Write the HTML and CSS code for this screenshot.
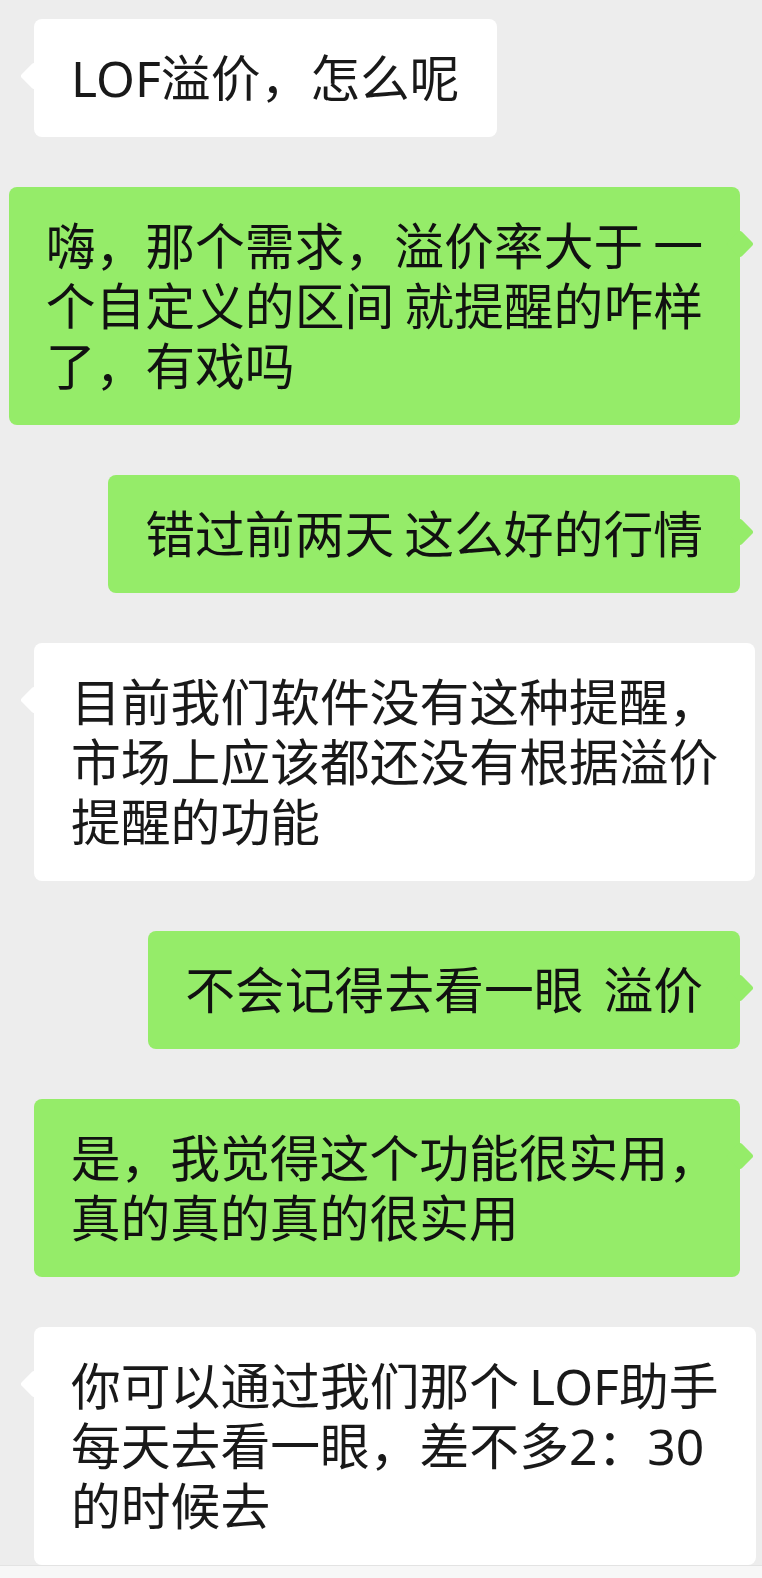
FILE: index.html
```html
<!DOCTYPE html>
<html lang="zh-CN">
<head>
    <meta charset="UTF-8">
    <meta name="viewport" content="width=device-width, initial-scale=1.0">
    <title>聊天</title>
    <link rel="stylesheet" href="styles.css">
</head>
<body>
    <div class="chat">
        <div class="msg left">
            <div class="bubble">LOF溢价，怎么呢</div>
        </div>

        <div class="msg right">
            <div class="bubble">嗨，那个需求，溢价率大于 一<br>个自定义的区间 就提醒的咋样<br>了，有戏吗</div>
        </div>

        <div class="msg right">
            <div class="bubble">错过前两天 这么好的行情</div>
        </div>

        <div class="msg left">
            <div class="bubble">目前我们软件没有这种提醒<span class="end">，</span><br>市场上应该都还没有根据溢价<br>提醒的功能</div>
        </div>

        <div class="msg right">
            <div class="bubble">不会记得去看一眼&nbsp;&nbsp;溢价</div>
        </div>

        <div class="msg right">
            <div class="bubble">是，我觉得这个功能很实用<span class="end">，</span><br>真的真的真的很实用</div>
        </div>

        <div class="msg left">
            <div class="bubble">你可以通过我们那个 LOF助手<br>每天去看一眼，差不多2：30<br>的时候去</div>
        </div>
    </div>
    <!-- barra de entrada (só a borda de cima aparece) -->
    <div class="input-bar"></div>
</body>
</html>
```

FILE: styles.css
```css
body {
    margin: 0;
    background-color: #ededed;
    font-family: "Noto Sans", "Noto Sans CJK SC", sans-serif;
    color: #191919;
}
.chat {
    display: flex;
    flex-direction: column;
    gap: 50px;
    padding-top: 19px;
}
.msg {
    display: flex;
}
.msg.left {
    justify-content: flex-start;
    padding-left: 34px;
}
.msg.right {
    justify-content: flex-end;
    padding-right: 22px;
}
.bubble {
    position: relative;
    padding: 29px 37px;
    font-size: 49.8px;
    line-height: 60px;
    word-spacing: -3px;
    white-space: nowrap;
    border-radius: 8px;
    background: white;
}
.right .bubble {
    background: #95ec69;
    color: #111;
}
/* vírgula no fim da linha fica mais estreita */
.end {
    letter-spacing: -15px;
}
/* bico do balão */
.bubble::before {
    content: "";
    position: absolute;
    top: 47px;
    width: 20px;
    height: 20px;
    border-radius: 3px;
    background: inherit;
    transform: rotate(45deg);
}
.left .bubble::before {
    left: -10px;
}
.right .bubble::before {
    right: -10px;
}
.input-bar {
    height: 14px;
    background: #f7f7f7;
    border-top: 1px solid #e3e3e3;
}
```
